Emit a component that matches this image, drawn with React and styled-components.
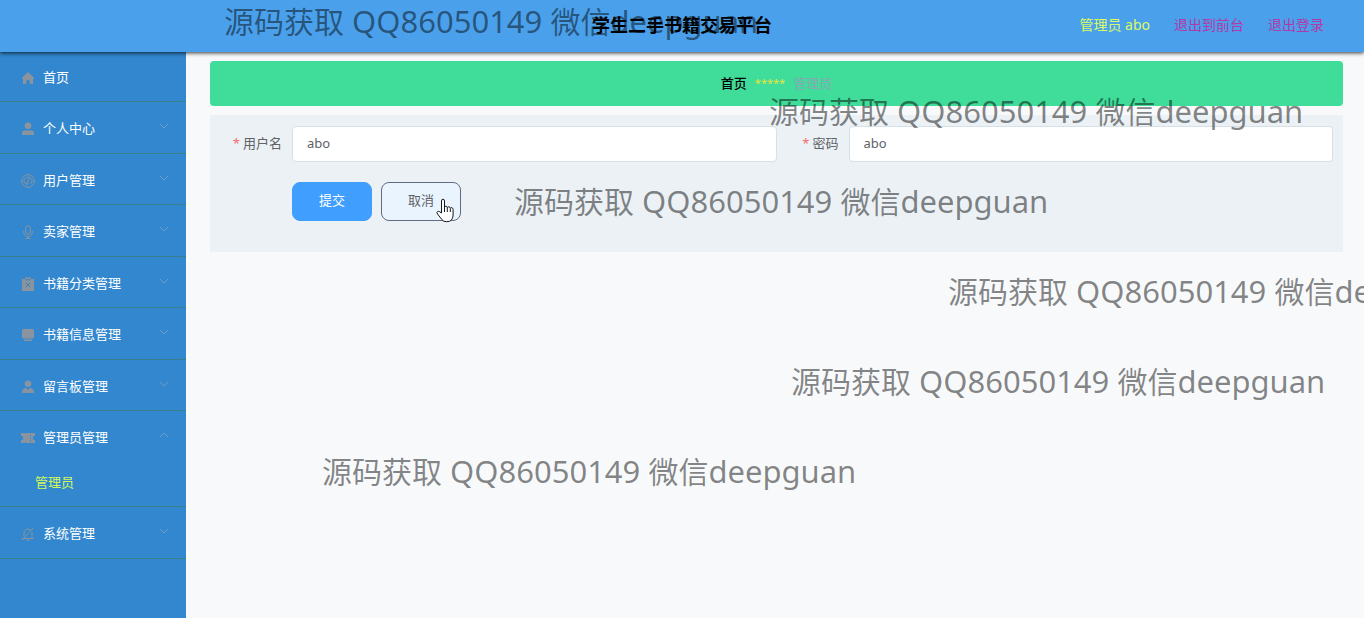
import React from "react";
import styled, { createGlobalStyle } from "styled-components";

const GlobalStyle = createGlobalStyle`
  * { box-sizing: border-box; }
  html, body, #root { min-height: 100vh; }
  body {
    margin: 0;
    background: #f7f9fb;
    color: #606266;
    font: 13px/20px "Noto Sans", "Noto Sans CJK SC", sans-serif;
  }
  button, input { font: inherit; }
  a { text-decoration: none; }
`;

const Page = styled.div`
  position: relative;
  display: flex;
  flex-direction: column;
  min-height: 100vh;
  overflow: hidden;
`;

const Header = styled.header`
  z-index: 1;
  display: grid;
  grid-template-columns: 1fr auto 1fr;
  align-items: center;
  height: 52px;
  padding: 0 40px 2px;
  background: #4aa0eb;
  box-shadow: 0 1px 4px rgba(0, 0, 0, 0.8);
`;

const Title = styled.h1`
  grid-column: 2;
  margin: 0;
  color: #000;
  font-size: 18px;
  font-weight: 700;
  line-height: 24px;
`;

const Account = styled.div`
  display: flex;
  justify-content: flex-end;
  gap: 24px;
  font-size: 14px;
`;

const UserName = styled.span`
  color: #d9fb64;
`;

const HeaderLink = styled.a`
  color: #b23aa8;
`;

const Body = styled.div`
  display: flex;
  flex: 1;
`;

const Sidebar = styled.nav`
  width: 186px;
  flex: none;
  background: #3287ce;
`;

const Menu = styled.ul`
  margin: 0;
  padding: 0;
  list-style: none;
`;

const MenuItem = styled.li`
  border-bottom: 1px solid #377f8c;
`;

const MenuLink = styled.a`
  display: flex;
  align-items: center;
  height: 50px;
  padding: 1px 16px 0 21px;
  color: #fff;

  ${MenuItem}:nth-child(even) & {
    height: 51px;
  }
  ${MenuItem}:first-child & {
    height: 49px;
    padding-top: 0;
  }
  ${MenuItem}:last-child & {
    height: 51px;
  }
`;

const MenuIcon = styled.svg`
  width: 14px;
  height: 14px;
  margin: 2px 8px 0 0;
  color: #8a949f;
`;

const MenuLabel = styled.span`
  flex: 1;
`;

const Arrow = styled.svg`
  width: 12px;
  height: 12px;
  margin-bottom: 4px;
  color: #6c9cc9;
  transform: ${(p) => (p.$open ? "rotate(180deg)" : "none")};
`;

const SubLink = styled.a`
  display: block;
  height: 44px;
  padding: 10px 35px;
  color: #d0fa5c;
`;

const Content = styled.main`
  flex: 1;
  min-width: 0;
  padding: 9px 21px 0 24px;
`;

const Breadcrumb = styled.nav`
  display: flex;
  align-items: center;
  justify-content: center;
  gap: 8px;
  height: 45px;
  padding-bottom: 2px;
  border-radius: 4px;
  background: #40dd9a;
`;

const HomeCrumb = styled.a`
  color: #000;
  font-weight: 500;
`;

const Separator = styled.span`
  color: #e2e53e;
  font-size: 11px;
`;

const CurrentCrumb = styled.span`
  color: #84a9b2;
`;

const Form = styled.form`
  margin-top: 9px;
  padding: 11px 10px 31px 0;
  background: #ebf1f5;
`;

const Fields = styled.div`
  display: grid;
  grid-template-columns: 82px 1fr 72px 1fr;
  align-items: center;
`;

const FieldLabel = styled.label`
  padding: 0 10px 2px 0;
  text-align: right;

  &::before {
    content: "*";
    margin-right: 3px;
    color: #f56c6c;
  }
`;

const TextInput = styled.input`
  width: 100%;
  min-width: 0;
  height: 36px;
  padding: 0 14px 2px;
  border: 1px solid #d7e0e7;
  border-radius: 4px;
  background: #fff;
  color: #606266;
`;

const Actions = styled.div`
  display: flex;
  gap: 9px;
  padding: 20px 0 0 82px;
`;

const Button = styled.button`
  width: 80px;
  height: 39px;
  padding: 0 0 4px;
  border: 1px solid ${(p) => (p.$primary ? "#409eff" : "#606a80")};
  border-radius: 8px;
  background: ${(p) => (p.$primary ? "#409eff" : "#eaf4ff")};
  color: ${(p) => (p.$primary ? "#fff" : "#606266")};
  cursor: pointer;
`;

const Pointer = styled.svg`
  position: absolute;
  left: 436px;
  top: 198px;
  width: 20px;
  height: 26px;
`;

const Watermark = styled.span`
  position: absolute;
  z-index: 2;
  left: ${(p) => p.$x}px;
  top: ${(p) => p.$y}px;
  color: rgba(0, 0, 0, 0.48);
  font-size: 30px;
  line-height: 40px;
  white-space: pre;
  pointer-events: none;
`;

const Latin = styled.span`
  font-size: 31px;
`;

const icons = {
  home: <path fill="currentColor" d="M7 1 .5 7.2 1.3 8 2 7.5V13h3.3V9.2h3.4V13H12V7.5l.7.5.8-.8z" />,
  user: (
    <g fill="currentColor">
      <circle cx="7" cy="3.8" r="3.3" />
      <path d="M1 13v-2.2Q1 8.5 3.5 8.5h7Q13 8.5 13 10.8V13z" />
    </g>
  ),
  gauge: (
    <g fill="none" stroke="currentColor">
      <circle cx="7" cy="7" r="6.3" />
      <path d="M4 9.8A4 4 0 1 1 10 9.8M6.2 9.5 8.2 4.3" />
      <circle cx="6" cy="9.5" r="1" />
    </g>
  ),
  mic: (
    <g fill="none" stroke="currentColor">
      <rect x="4.7" y=".7" width="4.6" height="8.6" rx="2.3" />
      <path d="M2.7 6v1.3a4.3 4.3 0 0 0 8.6 0V6M7 11.5v2M4.5 13.4h5" />
    </g>
  ),
  clipboard: (
    <g>
      <path fill="currentColor" d="M1 2h3V.5h6V2h3v12H1z" />
      <path d="m4.8 5.6 4.4 4.6m0-4.6-4.4 4.6M4.2 2.8h5.6" stroke="#3b80bd" fill="none" />
    </g>
  ),
  platform: (
    <g fill="currentColor">
      <rect x="1" y="1" width="12" height="9.5" rx="1.5" />
      <path d="M3 11.5h8V13H3z" />
    </g>
  ),
  custom: (
    <g fill="currentColor">
      <circle cx="7" cy="3.8" r="3.3" />
      <path d="M.8 13Q1 8.8 4.5 7.7L7 9.8l2.5-2.1Q13 8.8 13.2 13z" />
    </g>
  ),
  ticket: (
    <path
      fill="currentColor"
      fillRule="evenodd"
      d="M0 2h4l.6.8.6-.8H14v2.8a2.2 2.2 0 0 0 0 4.4V12H5.2l-.6-.8L4 12H0V9.2a2.2 2.2 0 0 0 0-4.4zM9 4v1.5h1V4zm0 2.5V8h1V6.500zM9 9v1.500h1V9z"
    />
  ),
  bellOff: (
    <g fill="none" stroke="currentColor">
      <path d="M1 11.500h11.500M3 9.500V6a4 4 0 0 1 7-2.500M11 5v6.500M5.500 13.300h3M1 13 12.500.8" />
    </g>
  ),
};

const menu = [
  { label: "首页", icon: "home", leaf: true },
  { label: "个人中心", icon: "user" },
  { label: "用户管理", icon: "gauge" },
  { label: "卖家管理", icon: "mic" },
  { label: "书籍分类管理", icon: "clipboard" },
  { label: "书籍信息管理", icon: "platform" },
  { label: "留言板管理", icon: "custom" },
  { label: "管理员管理", icon: "ticket", children: ["管理员"] },
  { label: "系统管理", icon: "bellOff" },
];

const watermarks = [
  [224, 1],
  [769, 91],
  [514, 181],
  [948, 271],
  [791, 361],
  [322, 451],
];

export default function App() {
  return (
    <Page>
      <GlobalStyle />
      <Header>
        <Title>学生二手书籍交易平台</Title>
        <Account>
          <UserName>管理员 abo</UserName>
          <HeaderLink href="#front">退出到前台</HeaderLink>
          <HeaderLink href="#logout">退出登录</HeaderLink>
        </Account>
      </Header>
      <Body>
        <Sidebar>
          <Menu>
            {menu.map((item) => (
              <MenuItem key={item.label}>
                <MenuLink href="#menu">
                  <MenuIcon viewBox="0 0 14 14" aria-hidden="true">
                    {icons[item.icon]}
                  </MenuIcon>
                  <MenuLabel>{item.label}</MenuLabel>
                  {!item.leaf && (
                    <Arrow viewBox="0 0 12 12" $open={!!item.children} aria-hidden="true">
                      <path d="m2 4 4 4 4-4" fill="none" stroke="currentColor" />
                    </Arrow>
                  )}
                </MenuLink>
                {item.children?.map((child) => (
                  <SubLink key={child} href="#admin">
                    {child}
                  </SubLink>
                ))}
              </MenuItem>
            ))}
          </Menu>
        </Sidebar>
        <Content>
          <Breadcrumb>
            <HomeCrumb href="#home">首页</HomeCrumb>
            <Separator>*****</Separator>
            <CurrentCrumb>管理员</CurrentCrumb>
          </Breadcrumb>
          <Form onSubmit={(e) => e.preventDefault()}>
            <Fields>
              <FieldLabel htmlFor="username">用户名</FieldLabel>
              <TextInput id="username" defaultValue="abo" />
              <FieldLabel htmlFor="password">密码</FieldLabel>
              <TextInput id="password" defaultValue="abo" />
            </Fields>
            <Actions>
              <Button type="submit" $primary>
                提交
              </Button>
              <Button type="button">取消</Button>
            </Actions>
          </Form>
        </Content>
      </Body>
      {watermarks.map(([x, y]) => (
        <Watermark key={y} $x={x} $y={y}>
          源码获取<Latin> QQ86050149 </Latin>微信<Latin>deepguan</Latin>
        </Watermark>
      ))}
      <Pointer viewBox="0 0 20 26" aria-hidden="true">
        <path
          d="M5.500 15V3q0-1.800 1.500-1.800T8.500 3v6.500q0-1.300 1.300-1.300t1.500 1.500q.2-1 1.500-.9t1.500 1.500q.3-.8 1.500-.6t1.300 1.700V17q0 3-1.800 5.200-1.300 1.500-4.800 1.500-3.300 0-4.500-2L1.500 16q-1.200-1.700 0-2.400t2.300.2z"
          fill="#fff"
          stroke="#16181d"
          strokeLinejoin="round"
        />
        <path d="M8.500 9v5M11.300 10v4M14.300 10.500V14" fill="none" stroke="#16181d" />
      </Pointer>
    </Page>
  );
}
